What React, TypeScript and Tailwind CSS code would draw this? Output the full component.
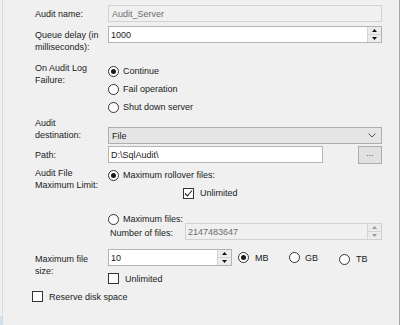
import React from "react";

const Radio = ({ checked }: { checked?: boolean }) => (
  <span className="w-[11px] h-[11px] rounded-full border border-[#333333] bg-white flex items-center justify-center shrink-0">
    {checked && <span className="w-[5px] h-[5px] rounded-full bg-[#1a1a1a]"></span>}
  </span>
);

const Check = ({ checked }: { checked?: boolean }) => (
  <span className="w-[11px] h-[11px] border border-[#333333] bg-white flex items-center justify-center shrink-0">
    {checked && (
      <svg width="9" height="9" viewBox="0 0 9 9">
        <path d="M1 4.5 L3.5 7 L8 1.5" fill="none" stroke="#222" strokeWidth="1.1" />
      </svg>
    )}
  </span>
);

const Spin = ({ disabled }: { disabled?: boolean }) => (
  <div className="w-[14px] h-full flex flex-col border-l border-[#d4d4d4] bg-[#ececec]">
    <div className="flex-1 flex items-center justify-center border-b border-[#d4d4d4]">
      <svg width="5" height="3" viewBox="0 0 5 3">
        <path d="M0 3 L2.5 0 L5 3 Z" fill={disabled ? "#9a9a9a" : "#111"} />
      </svg>
    </div>
    <div className="flex-1 flex items-center justify-center">
      <svg width="5" height="3" viewBox="0 0 5 3">
        <path d="M0 0 L2.5 3 L5 0 Z" fill={disabled ? "#9a9a9a" : "#111"} />
      </svg>
    </div>
  </div>
);

export default function App() {
  return (
    <div className="w-[400px] h-[325px] bg-[#f0f0f0] flex overflow-hidden font-['Liberation_Sans',Arial,sans-serif] text-[9px] leading-[12px] text-[#1a1a1a]">
      <div className="w-[2px] bg-[#f0f0f0] flex flex-col justify-end">
        <div className="h-[9px] bg-[#cde3f5]"></div>
      </div>
      <div className="w-px bg-[#dadada]"></div>
      <div className="flex-1 flex flex-col pl-[32px]">
        {/* Audit name */}
        <div className="flex items-center mt-[5px] h-[17px]">
          <div className="w-[73px]">Audit name:</div>
          <div className="w-[274px] h-[17px] border border-[#d2d2d2] bg-[#f0f0f0] text-[#6d6d6d] pl-[3px] flex items-center">
            Audit_Server
          </div>
        </div>

        {/* Queue delay */}
        <div className="flex items-start mt-[4px]">
          <div className="w-[73px] pt-[3px]">
            Queue delay (in
            <br />
            milliseconds):
          </div>
          <div className="w-[274px] h-[17px] border border-[#b4b4b4] bg-white flex">
            <div className="flex-1 pl-[2px] flex items-center">1000</div>
            <Spin />
          </div>
        </div>

        {/* On Audit Log Failure */}
        <div className="flex items-start mt-[9px]">
          <div className="w-[73px]">
            On Audit Log
            <br />
            Failure:
          </div>
          <div className="flex flex-col">
            <div className="h-[18px] flex items-center gap-[4px]">
              <Radio checked />
              <span>Continue</span>
            </div>
            <div className="h-[18px] flex items-center gap-[4px]">
              <Radio />
              <span>Fail operation</span>
            </div>
            <div className="h-[18px] flex items-center gap-[4px]">
              <Radio />
              <span>Shut down server</span>
            </div>
          </div>
        </div>

        {/* Audit destination */}
        <div className="flex items-start mt-[1px]">
          <div className="w-[73px]">
            Audit
            <br />
            destination:
          </div>
          <div className="mt-[10px] w-[274px] h-[17px] border border-[#adadad] bg-[#e5e5e5] flex items-center pl-[3px]">
            <span className="flex-1">File</span>
            <svg width="8" height="5" viewBox="0 0 8 5" className="mr-[5px]">
              <path d="M0.5 0.5 L4 4 L7.5 0.5" fill="none" stroke="#555" strokeWidth="1" />
            </svg>
          </div>
        </div>

        {/* Path */}
        <div className="flex items-center mt-[2px] h-[17px]">
          <div className="w-[73px]">Path:</div>
          <div className="w-[215px] h-[17px] border border-[#b4b4b4] bg-white pl-[2px] flex items-center">
            D:\SqlAudit\
          </div>
          <div className="ml-[35px] w-[24px] h-[18px] border border-[#adadad] bg-[#e1e1e1] flex items-center justify-center text-[#555] leading-none pb-[2px]">
            ...
          </div>
        </div>

        {/* Audit File Maximum Limit */}
        <div className="flex items-start mt-[4px]">
          <div className="w-[73px]">
            Audit File
            <br />
            Maximum Limit:
          </div>
          <div className="flex flex-col">
            <div className="h-[16px] flex items-center gap-[4px]">
              <Radio checked />
              <span>Maximum rollover files:</span>
            </div>
            <div className="h-[16px] flex items-center gap-[6px] ml-[75px] mt-[2px]">
              <Check checked />
              <span>Unlimited</span>
            </div>
            <div className="h-[10px] flex items-center gap-[4px] mt-[13px]">
              <Radio />
              <span>Maximum files:</span>
            </div>
          </div>
        </div>

        {/* Number of files */}
        <div className="flex items-center h-[17px] ml-[75px] -mt-[1px]">
          <div className="w-[75px] pt-[2px]">Number of files:</div>
          <div className="w-[197px] h-[17px] border border-[#d2d2d2] bg-[#f0f0f0] text-[#6d6d6d] flex">
            <div className="flex-1 pl-[2px] flex items-center">2147483647</div>
            <Spin disabled />
          </div>
        </div>

        {/* Maximum file size */}
        <div className="flex items-start mt-[9px]">
          <div className="w-[73px] pt-[4px]">
            Maximum file
            <br />
            size:
          </div>
          <div className="flex flex-col">
            <div className="flex items-center h-[17px]">
              <div className="w-[124px] h-[17px] border border-[#b4b4b4] bg-white flex">
                <div className="flex-1 pl-[2px] flex items-center">10</div>
                <Spin />
              </div>
              <div className="ml-[6px] w-[51px] flex items-center gap-[6px]">
                <Radio checked />
                <span>MB</span>
              </div>
              <div className="w-[50px] flex items-center gap-[5px]">
                <Radio />
                <span>GB</span>
              </div>
              <div className="flex items-center gap-[6px] mt-[3px]">
                <Radio />
                <span>TB</span>
              </div>
            </div>
            <div className="flex items-center gap-[6px] mt-[7px] h-[11px]">
              <Check />
              <span>Unlimited</span>
            </div>
          </div>
        </div>

        {/* Reserve disk space */}
        <div className="flex items-center gap-[6px] mt-[7px] h-[11px] -ml-[3px]">
          <Check />
          <span>Reserve disk space</span>
        </div>
      </div>
      <div className="w-px bg-[#a8a8a8]"></div>
    </div>
  );
}
